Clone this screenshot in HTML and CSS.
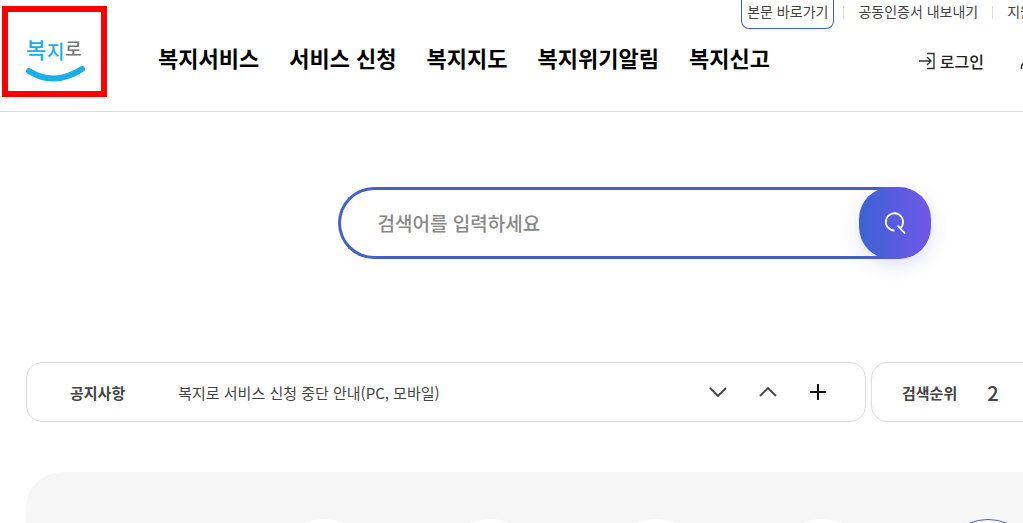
FILE: index.html
```html
<!DOCTYPE html>
<html lang="ko">
<head>
    <meta charset="UTF-8">
    <meta name="viewport" content="width=device-width, initial-scale=1">
    <title>복지로</title>
    <link rel="stylesheet" href="styles.css">
</head>
<body>
    <header class="header">
        <a class="logo" href="#" aria-label="복지로">
            <svg width="64" height="60" viewBox="0 0 64 60">
                <g font-weight="500">
                    <text x="3" y="36" font-size="22" fill="#17b1e7">복</text>
                    <text x="24" y="37" font-size="19" fill="#17b1e7">지</text>
                    <text x="42" y="34" font-size="18" fill="#767676">로</text>
                </g>
                <path d="M6 49Q31 65 59 47" fill="none" stroke="#17b1e7" stroke-width="6" stroke-linecap="round"/>
            </svg>
        </a>
        <nav class="menu">
            <a href="#">복지서비스</a>
            <a href="#">서비스 신청</a>
            <a href="#">복지지도</a>
            <a href="#">복지위기알림</a>
            <a href="#">복지신고</a>
        </nav>
        <div class="utility">
            <div class="top-links">
                <a class="skip" href="#content">본문 바로가기</a>
                <span class="bar"></span>
                <a href="#">공동인증서 내보내기</a>
                <span class="bar"></span>
                <a href="#">지원</a>
            </div>
            <div class="member">
                <a href="#">
                    <svg width="18" height="18" viewBox="0 0 18 18" fill="none" stroke="#333" stroke-width="1.4">
                        <path d="M9 1.5h7v15H9M1 9h12M9 5l4 4-4 4"/>
                    </svg>
                    로그인
                </a>
                <a href="#" aria-label="회원가입">
                    <svg width="18" height="18" viewBox="0 0 18 18" fill="none" stroke="#333" stroke-width="1.5">
                        <circle cx="9" cy="5" r="4"/>
                        <path d="M1.5 17v-2q0-4 4-4h7q4 0 4 4v2"/>
                    </svg>
                </a>
            </div>
        </div>
    </header>

    <main class="content" id="content">
        <form class="search">
            <input type="text" placeholder="검색어를 입력하세요" aria-label="검색어">
            <button type="button" aria-label="검색">
                <svg width="24" height="24" viewBox="0 0 24 24" fill="none" stroke="#fff" stroke-width="1.8">
                    <path d="M11.5 19.5A8.6 8.6 0 1 1 17.5 17M14.5 14.5l7.5 8"/>
                </svg>
            </button>
        </form>

        <div class="info">
            <section class="notice">
                <h2>공지사항</h2>
                <a href="#">복지로 서비스 신청 중단 안내(PC, 모바일)</a>
                <div class="controls">
                    <button type="button" aria-label="다음">
                        <svg width="18" height="18" viewBox="0 0 18 18"><path d="M1 5l8 8 8-8"/></svg>
                    </button>
                    <button type="button" aria-label="이전">
                        <svg width="18" height="18" viewBox="0 0 18 18"><path d="M1 13l8-8 8 8"/></svg>
                    </button>
                    <button type="button" class="more" aria-label="더보기">
                        <svg width="18" height="18" viewBox="0 0 18 18"><path d="M9 1v16M1 9h16"/></svg>
                    </button>
                </div>
            </section>
            <section class="rank">
                <h2>검색순위</h2>
                <strong>2</strong>
            </section>
        </div>

        <section class="services">
            <span class="circle"></span>
            <span class="circle"></span>
            <span class="circle"></span>
            <span class="circle"></span>
            <span class="circle active"></span>
        </section>
    </main>
</body>
</html>
```
FILE: styles.css
```css
* {
    box-sizing: border-box;
}

body {
    margin: 0;
    height: 100vh;
    display: flex;
    flex-direction: column;
    overflow: hidden;
    background: #fff;
    color: #333;
    font-family: "Noto Sans CJK KR", "Noto Sans", sans-serif;
}

a {
    color: inherit;
    text-decoration: none;
    white-space: nowrap;
}

h2 {
    margin: 0;
    font-size: 15px;
    font-weight: 700;
    color: #444;
    white-space: nowrap;
}

svg {
    display: block;
}

button {
    padding: 0;
    border: 0;
    background: none;
    cursor: pointer;
}

/* header */
.header {
    display: flex;
    flex-shrink: 0;
    height: 112px;
    border-bottom: 1px solid #ddd;
}

.logo {
    display: flex;
    flex-shrink: 0;
    align-items: center;
    justify-content: center;
    width: 105px;
    height: 91px;
    margin: 6px 51px 0 2px;
    border: 6px solid #fe0000;
}

.menu {
    display: flex;
    flex-shrink: 0;
    gap: 30px;
    padding-top: 41px;
    font-size: 22px;
    font-weight: 700;
    line-height: 32px;
    color: #000;
}

/* top links are wider than the space beside the menu */
.utility {
    flex: 1;
    min-width: 0;
    display: flex;
    flex-direction: column;
    align-items: flex-end;
}

.top-links {
    display: flex;
    align-items: flex-start;
    gap: 9px;
    margin-right: -20px;
    font-size: 14px;
    line-height: 22px;
    color: #444;
}

.top-links a {
    padding: 0 5px;
}

.top-links a:last-child {
    padding-right: 10px;
}

.top-links .skip {
    height: 29px;
    border: 1px solid #4460c4;
    border-top: 0;
    border-radius: 0 0 8px 8px;
}

.bar {
    width: 1px;
    height: 13px;
    margin-top: 6px;
    background: #ddd;
}

.member {
    display: flex;
    gap: 36px;
    margin: 20px -15px 0 0;
    font-size: 16px;
    font-weight: 500;
    line-height: 24px;
    color: #222;
}

.member a {
    display: flex;
    align-items: center;
    gap: 4px;
}

/* main */
.content {
    flex: 1;
    display: flex;
    flex-direction: column;
    min-height: 0;
}

.search {
    display: flex;
    flex-shrink: 0;
    width: 58%;
    height: 72px;
    margin: 75px 0 0 33%;
}

.search input {
    flex: 1;
    min-width: 0;
    margin-right: -36px;
    padding: 0 37px 2px;
    border: 3px solid #4262c8;
    border-right: 0;
    border-radius: 36px 0 0 36px;
    outline: 0;
    background: #fff;
    font-family: inherit;
    font-size: 19px;
    font-weight: 500;
}

.search input::placeholder {
    color: #888;
}

.search button {
    display: flex;
    align-items: center;
    justify-content: center;
    width: 72px;
    border-radius: 32px;
    background: linear-gradient(90deg, #3d62d5, #7257e8);
    box-shadow: 0 6px 18px rgba(90, 90, 220, 0.2);
}

.info {
    display: flex;
    gap: 5px;
    margin: 103px -20px 0 26px;
}

.notice,
.rank {
    display: flex;
    align-items: center;
    height: 60px;
    border: 1px solid #ddd;
    border-radius: 16px;
}

.notice {
    flex: 1;
    padding: 0 38px 0 43px;
}

.notice > a {
    margin-left: 53px;
    font-size: 15px;
    color: #444;
}

.controls {
    display: flex;
    gap: 32px;
    margin-left: auto;
}

.controls svg {
    fill: none;
    stroke: #444;
    stroke-width: 1.8;
}

.controls .more svg {
    stroke: #111;
    stroke-width: 2;
}

.rank {
    width: 172px;
    padding-left: 30px;
    gap: 30px;
}

.rank strong {
    font-size: 20px;
    font-weight: 500;
    color: #444;
}

.services {
    flex: 1;
    display: flex;
    justify-content: flex-end;
    gap: 66px;
    min-height: 0;
    margin: 50px 0 0 26px;
    padding: 47px 0 0;
    overflow: hidden;
    border-radius: 36px 0 0 0;
    background: #f6f6f6;
}

.circle {
    flex: none;
    width: 100px;
    height: 100px;
    border-radius: 50%;
    background: #fff;
}

.circle.active {
    margin-right: -15px;
    border: 1px solid #4460c4;
}
```
